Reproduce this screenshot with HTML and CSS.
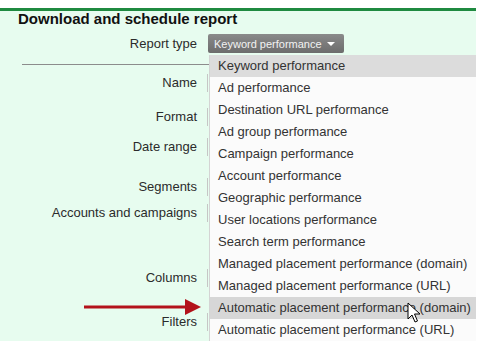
FILE: index.html
```html
<!DOCTYPE html>
<html lang="en">
<head>
    <meta charset="UTF-8">
    <title>Download and schedule report</title>
    <link rel="stylesheet" href="styles.css">
</head>
<body>
    <div class="panel">
        <h2 class="title">Download and schedule report</h2>

        <!-- Тип отчёта -->
        <div class="row row-type">
            <label>Report type</label>
            <div class="field">
                <button class="select">Keyword performance <span class="caret"></span></button>
                <ul class="menu">
                    <li class="on">Keyword performance</li>
                    <li>Ad performance</li>
                    <li>Destination URL performance</li>
                    <li>Ad group performance</li>
                    <li>Campaign performance</li>
                    <li>Account performance</li>
                    <li>Geographic performance</li>
                    <li>User locations performance</li>
                    <li>Search term performance</li>
                    <li>Managed placement performance (domain)</li>
                    <li>Managed placement performance (URL)</li>
                    <li class="hover">Automatic placement performance (domain)</li>
                    <li>Automatic placement performance (URL)</li>
                </ul>
                <svg class="cursor" width="14" height="22" viewBox="0 0 14 22">
                    <path d="M1 1 L1 17 L5 13 L8 20 L10.5 19 L7.5 12 L13 12 Z" fill="#fff" stroke="#000" stroke-width="1" stroke-linejoin="round"/>
                </svg>
            </div>
        </div>

        <hr class="sep">

        <div class="row row-name"><label>Name</label><div class="field"><div class="ctl"></div></div></div>
        <div class="row row-format"><label>Format</label><div class="field"><div class="ctl"></div></div></div>
        <div class="row row-date"><label>Date range</label><div class="field"><div class="ctl"></div></div></div>
        <div class="row row-seg"><label>Segments</label><div class="field"><div class="ctl"></div></div></div>
        <div class="row row-acc"><label>Accounts and campaigns</label><div class="field"><div class="ctl"></div></div></div>
        <div class="row row-col"><label>Columns</label><div class="field"><div class="ctl"></div></div></div>
        <div class="row row-filter"><label>Filters</label><div class="field"><div class="ctl"></div></div></div>

        <!-- Стрелка-указатель -->
        <svg class="pointer" width="118" height="16" viewBox="0 0 118 16">
            <rect x="0" y="6.5" width="104" height="3" fill="#b3121a"/>
            <path d="M101 0 L117 8 L101 16 Z" fill="#b3121a"/>
        </svg>
    </div>
</body>
</html>
```

FILE: styles.css
```css
body {
    margin: 0;
    padding-top: 8px;
    font-family: 'Liberation Sans', Arial, sans-serif;
    color: #2b2b2b;
    background: #ffffff;
}

.panel {
    position: relative;
    margin-right: 4px;
    height: 330px;
    border-top: 3px solid #1f8a40;
    background-color: #e7fcef;
}

.title {
    margin: 0 0 0 18px;
    font-size: 15px;
    line-height: 16px;
    font-weight: bold;
    color: #111111;
}

.row {
    display: flex;
    align-items: flex-start;
}

.row label {
    width: 197px;
    text-align: right;
    font-size: 13px;
    line-height: 20px;
    flex-shrink: 0;
}

.field {
    position: relative;
    margin-left: 10px;
}

.ctl {
    width: 60px;
    height: 18px;
    margin-top: 1px;
    border-left: 1px solid #c6c6c6;
}

.row-type {
    margin-top: 7px;
    height: 19px;
}

.row-type label {
    line-height: 19px;
}

.row-name { height: 34px; }
.row-format { height: 30px; }
.row-date { height: 40px; }
.row-seg { height: 26px; }
.row-acc { height: 65px; }
.row-col { height: 44px; }
.row-filter { height: 29px; }

.select {
    display: flex;
    align-items: center;
    gap: 5px;
    height: 19px;
    margin-left: 1px;
    padding: 0 9px 0 6px;
    border: none;
    border-radius: 2px;
    background: linear-gradient(#8a8a8a, #6c6c6c);
    color: #f2f2f2;
    font-family: 'Liberation Sans', Arial, sans-serif;
    font-size: 11px;
}

.caret {
    width: 0;
    height: 0;
    border-left: 4px solid transparent;
    border-right: 4px solid transparent;
    border-top: 4px solid #ffffff;
}

.sep {
    width: 200px;
    margin: 11px 0 8px 22px;
    border: none;
    border-top: 1px solid #8c8c8c;
}

.menu {
    position: absolute;
    top: 21px;
    left: 2px;
    width: 266px;
    margin: 0;
    padding: 0;
    list-style: none;
    background-color: #fbfbfb;
    border-left: 1px solid #d4d4d4;
    z-index: 2;
}

.menu li {
    height: 22px;
    line-height: 22px;
    padding-left: 8px;
    font-size: 13px;
    color: #333333;
    white-space: nowrap;
}

.menu li.on {
    background-color: #dcdcdc;
}

.menu li.hover {
    background-color: #d7d7d7;
}

.cursor {
    position: absolute;
    top: 268px;
    left: 200px;
    z-index: 3;
}

.pointer {
    position: absolute;
    top: 288px;
    left: 84px;
}
```
